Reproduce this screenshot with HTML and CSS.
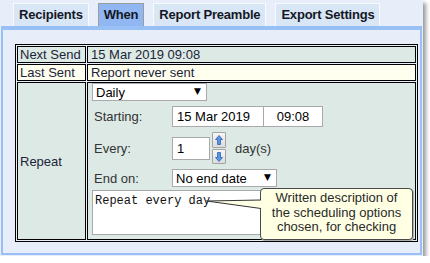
FILE: index.html
```html
<!DOCTYPE html>
<html lang="en">
<head>
  <meta charset="UTF-8">
  <title>Schedule - When</title>
  <link rel="stylesheet" href="styles.css">
</head>
<body>
  <div class="window">
    <div class="tabs">
      <div class="tab">Recipients</div>
      <div class="tab active">When</div>
      <div class="tab">Report Preamble</div>
      <div class="tab">Export Settings</div>
    </div>

    <div class="panel">
      <table class="sched">
        <tr class="odd">
          <td class="lbl">Next Send</td>
          <td class="val">15 Mar 2019 09:08</td>
        </tr>
        <tr class="even">
          <td class="lbl">Last Sent</td>
          <td class="val">Report never sent</td>
        </tr>
        <tr class="odd">
          <td class="lbl mid">Repeat</td>
          <td class="repeat">
            <div class="ctl">
              <span class="pick freq">
                <select><option>Daily</option></select>
              </span>
              <div class="line">
                <label>Starting:</label>
                <input class="date" type="text" value="15 Mar 2019">
                <input class="time" type="text" value="09:08">
              </div>
              <div class="line every">
                <label>Every:</label>
                <input class="num" type="text" value="1">
                <span class="spin">
                  <button class="up"><svg width="8" height="10" viewBox="0 0 8 10"><path d="M4 0.5 L7.5 4.5 L5.5 4.5 L5.5 9.5 L2.5 9.5 L2.5 4.5 L0.5 4.5 Z" fill="#5b95e0" stroke="#2a62b5" stroke-width="0.8"/></svg></button>
                  <button class="down"><svg width="8" height="10" viewBox="0 0 8 10"><path d="M4 9.5 L7.5 5.5 L5.5 5.5 L5.5 0.5 L2.5 0.5 L2.5 5.5 L0.5 5.5 Z" fill="#5b95e0" stroke="#2a62b5" stroke-width="0.8"/></svg></button>
                </span>
                <span class="unit">day(s)</span>
              </div>
              <div class="line">
                <label>End on:</label>
                <span class="pick end">
                  <select><option>No end date</option></select>
                </span>
              </div>
              <textarea class="desc">Repeat every day</textarea>
            </div>
          </td>
        </tr>
      </table>
    </div>

    <div class="note">
      Written description of<br>
      the scheduling options<br>
      chosen, for checking
      <svg class="tail" width="58" height="11" viewBox="0 0 58 11">
        <polygon points="0.5,2 56,1 56,9.5" fill="#ffffe4"/>
        <polyline points="55,1 0.5,2 55,9.5" fill="none" stroke="#333" stroke-width="1"/>
      </svg>
    </div>
  </div>
</body>
</html>
```

FILE: styles.css
```css
* { box-sizing: border-box; }
body { margin: 0; background: #fff; font-family: "Liberation Sans", Arial, sans-serif; font-size: 13px; color: #222; }

.window {
  position: relative; width: 423px; height: 256px; padding-top: 3px;
  background: #e7eef9; box-shadow: 3px 3px 4px rgba(0, 0, 0, .4);
}

.tabs { display: flex; gap: 9px; padding-left: 13px; height: 23px; }
.tab {
  height: 23px; line-height: 21px; padding: 0 5px;
  border: 1px solid #f8fafe; border-bottom: none;
  background: #d9e6f6; font-weight: bold; color: #141824; letter-spacing: -0.2px;
}
.tab.active { background: #91b7f2; border-color: #9c9c9c; }

.panel {
  margin-left: 1px; width: 421px; height: 229px;
  border: 2px solid #99c0f4; border-top-width: 4px;
  padding: 14px 2px 11px 12px; background: #e7eef9;
}

.sched { width: 403px; border: 1px solid #000; border-spacing: 1px; table-layout: fixed; }
.sched td { border: 1px solid #000; padding: 0 2px; line-height: 15px; color: #1c2438; white-space: nowrap; }
.sched .lbl { width: 69px; }
.sched .val { padding-left: 3px; }
.sched .mid { vertical-align: middle; }
.odd td { background: #dde9e5; }
.even td { background: #fffff0; }

.sched .repeat { padding: 0 4px 4px 4px; vertical-align: top; }
.ctl { display: flex; flex-direction: column; align-items: flex-start; }

.pick { position: relative; display: block; height: 18px; }
.pick select {
  appearance: none; -webkit-appearance: none; width: 100%; height: 100%;
  border: 1px solid #a9a9a9; border-radius: 0; background: #fff;
  font: 13px "Liberation Sans", Arial, sans-serif; color: #000; padding: 0 0 0 3px;
}
.pick::after {
  content: "\25BC"; position: absolute; right: 6px; top: 3px;
  font: 9px "DejaVu Sans", sans-serif; color: #000; pointer-events: none;
}
.freq { width: 115px; }
.end { width: 105px; }

.line { display: flex; align-items: center; margin-top: 5px; }
.line label { width: 80px; padding-left: 2px; color: #333; }

input {
  border: 1px solid #a9a9a9; background: #fff; color: #000;
  font: 13px "Liberation Sans", Arial, sans-serif; padding: 0 4px;
}
.date { width: 92px; height: 21px; }
.time { width: 60px; height: 21px; margin-left: -1px; text-align: center; }

.every { height: 32px; }
.num { width: 38px; height: 23px; }
.spin { display: flex; flex-direction: column; gap: 1px; margin-left: 2px; }
.spin button {
  width: 14px; padding: 0; border: 1px solid #a4a4a4; border-radius: 1px;
  background: linear-gradient(#f6f6f6, #dcdcdc);
  display: flex; align-items: center; justify-content: center;
}
.spin .up { height: 16px; }
.spin .down { height: 15px; }
.unit { margin-left: 9px; color: #333; }

.desc {
  margin-top: 3px; width: 240px; height: 45px; resize: none;
  border: 1px solid #a9a9a9; background: #fff; color: #111;
  font: 12px "Liberation Mono", "Courier New", monospace; padding: 3px 2px 2px;
}

.note {
  position: absolute; left: 260px; top: 188px; width: 153px; height: 52px;
  background: #ffffe4; border: 1px solid #4a4a4a; border-radius: 4px;
  box-shadow: 1px 1px 0 #a7b0ad; padding-top: 2px;
  text-align: center; font-size: 13px; line-height: 14.5px; color: #2a2a2a;
}
.note .tail { position: absolute; left: -55px; top: 10px; }
```
